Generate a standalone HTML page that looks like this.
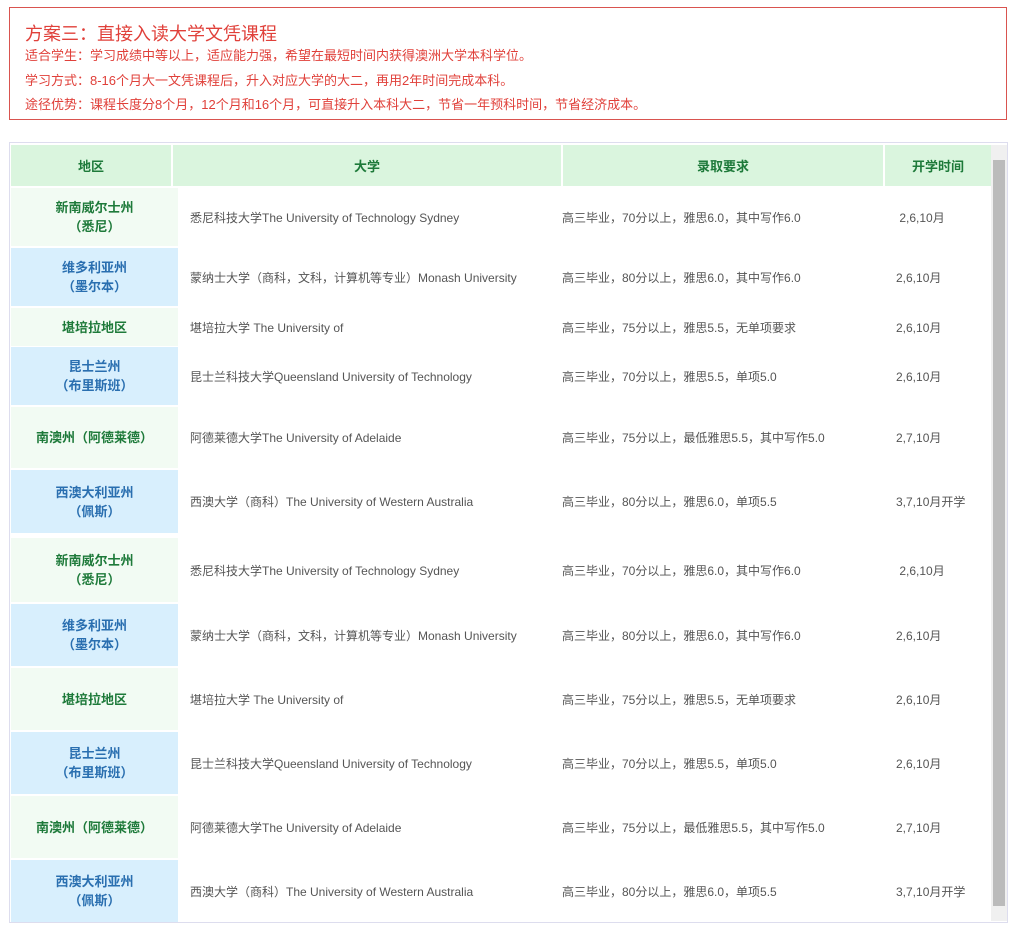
<html><head><style>
body{margin:0;width:1021px;height:949px;background:#fff;font-family:"Liberation Sans","Noto Sans CJK SC",sans-serif;position:relative;overflow:hidden}
.box{position:absolute;left:9px;top:7px;width:998px;height:113px;border:1px solid #d9534f;box-sizing:border-box;color:#e0403a}
.box h1{position:absolute;left:15px;top:12px;margin:0;font-size:18px;font-weight:normal}
.box p{position:absolute;left:15px;margin:0;font-size:13px}
.tbl{position:absolute;left:9px;top:142px;width:999px;height:781px;border:1px solid #dde;box-sizing:border-box;background:#fff}
.c{position:absolute;display:flex;align-items:center;font-size:12px;color:#555;box-sizing:border-box}
.h{background:#daf5de;color:#1e7a3a;font-weight:bold;font-size:13px;justify-content:center;top:145px;height:41px}
.r{justify-content:center;text-align:center;font-weight:bold;font-size:13px;line-height:19px;left:11px;width:167px}
.g{background:#f2fbf3;color:#1e7a3a}.b{background:#d8effd;color:#2a6fb0}
.u{left:190px}.q{left:562px}.t{left:896px}
.sb{position:absolute;left:991px;top:145px;width:16px;height:776px;background:#f0f0f0}
.th{position:absolute;left:993px;top:160px;width:12px;height:746px;background:#bbb}
</style></head><body>
<div class="box">
<h1>方案三：直接入读大学文凭课程</h1>
<p style="top:37px">适合学生：学习成绩中等以上，适应能力强，希望在最短时间内获得澳洲大学本科学位。</p>
<p style="top:62px">学习方式：8-16个月大一文凭课程后，升入对应大学的大二，再用2年时间完成本科。</p>
<p style="top:86px">途径优势：课程长度分8个月，12个月和16个月，可直接升入本科大二，节省一年预科时间，节省经济成本。</p>
</div>
<div class="tbl"></div>
<div class="c h" style="left:11px;width:160px">地区</div>
<div class="c h" style="left:173px;width:388px">大学</div>
<div class="c h" style="left:563px;width:320px">录取要求</div>
<div class="c h" style="left:885px;width:106px">开学时间</div>
<div class="sb"></div><div class="th"></div>

<div class="c r g" style="top:188px;height:58px">新南威尔士州<br>（悉尼）</div>
<div class="c u" style="top:188px;height:58px">悉尼科技大学The University of Technology Sydney</div>
<div class="c q" style="top:188px;height:58px">高三毕业，70分以上，雅思6.0，其中写作6.0</div>
<div class="c t" style="top:188px;height:58px">&nbsp;2,6,10月</div>

<div class="c r b" style="top:248px;height:58px">维多利亚州<br>（墨尔本）</div>
<div class="c u" style="top:248px;height:58px">蒙纳士大学（商科，文科，计算机等专业）Monash University</div>
<div class="c q" style="top:248px;height:58px">高三毕业，80分以上，雅思6.0，其中写作6.0</div>
<div class="c t" style="top:248px;height:58px">2,6,10月</div>

<div class="c r g" style="top:308px;height:38px">堪培拉地区</div>
<div class="c u" style="top:308px;height:38px">堪培拉大学 The University of</div>
<div class="c q" style="top:308px;height:38px">高三毕业，75分以上，雅思5.5，无单项要求</div>
<div class="c t" style="top:308px;height:38px">2,6,10月</div>

<div class="c r b" style="top:347px;height:58px">昆士兰州<br>（布里斯班）</div>
<div class="c u" style="top:347px;height:58px">昆士兰科技大学Queensland University of Technology</div>
<div class="c q" style="top:347px;height:58px">高三毕业，70分以上，雅思5.5，单项5.0</div>
<div class="c t" style="top:347px;height:58px">2,6,10月</div>

<div class="c r g" style="top:407px;height:61px">南澳州（阿德莱德）</div>
<div class="c u" style="top:407px;height:61px">阿德莱德大学The University of Adelaide</div>
<div class="c q" style="top:407px;height:61px">高三毕业，75分以上，最低雅思5.5，其中写作5.0</div>
<div class="c t" style="top:407px;height:61px">2,7,10月</div>

<div class="c r b" style="top:470px;height:63px">西澳大利亚州<br>（佩斯）</div>
<div class="c u" style="top:470px;height:63px">西澳大学（商科）The University of Western Australia</div>
<div class="c q" style="top:470px;height:63px">高三毕业，80分以上，雅思6.0，单项5.5</div>
<div class="c t" style="top:470px;height:63px">3,7,10月开学</div>

<div class="c r g" style="top:538px;height:64px">新南威尔士州<br>（悉尼）</div>
<div class="c u" style="top:538px;height:64px">悉尼科技大学The University of Technology Sydney</div>
<div class="c q" style="top:538px;height:64px">高三毕业，70分以上，雅思6.0，其中写作6.0</div>
<div class="c t" style="top:538px;height:64px">&nbsp;2,6,10月</div>

<div class="c r b" style="top:604px;height:62px">维多利亚州<br>（墨尔本）</div>
<div class="c u" style="top:604px;height:62px">蒙纳士大学（商科，文科，计算机等专业）Monash University</div>
<div class="c q" style="top:604px;height:62px">高三毕业，80分以上，雅思6.0，其中写作6.0</div>
<div class="c t" style="top:604px;height:62px">2,6,10月</div>

<div class="c r g" style="top:668px;height:62px">堪培拉地区</div>
<div class="c u" style="top:668px;height:62px">堪培拉大学 The University of</div>
<div class="c q" style="top:668px;height:62px">高三毕业，75分以上，雅思5.5，无单项要求</div>
<div class="c t" style="top:668px;height:62px">2,6,10月</div>

<div class="c r b" style="top:732px;height:62px">昆士兰州<br>（布里斯班）</div>
<div class="c u" style="top:732px;height:62px">昆士兰科技大学Queensland University of Technology</div>
<div class="c q" style="top:732px;height:62px">高三毕业，70分以上，雅思5.5，单项5.0</div>
<div class="c t" style="top:732px;height:62px">2,6,10月</div>

<div class="c r g" style="top:796px;height:62px">南澳州（阿德莱德）</div>
<div class="c u" style="top:796px;height:62px">阿德莱德大学The University of Adelaide</div>
<div class="c q" style="top:796px;height:62px">高三毕业，75分以上，最低雅思5.5，其中写作5.0</div>
<div class="c t" style="top:796px;height:62px">2,7,10月</div>

<div class="c r b" style="top:860px;height:62px">西澳大利亚州<br>（佩斯）</div>
<div class="c u" style="top:860px;height:62px">西澳大学（商科）The University of Western Australia</div>
<div class="c q" style="top:860px;height:62px">高三毕业，80分以上，雅思6.0，单项5.5</div>
<div class="c t" style="top:860px;height:62px">3,7,10月开学</div>
</body></html>
